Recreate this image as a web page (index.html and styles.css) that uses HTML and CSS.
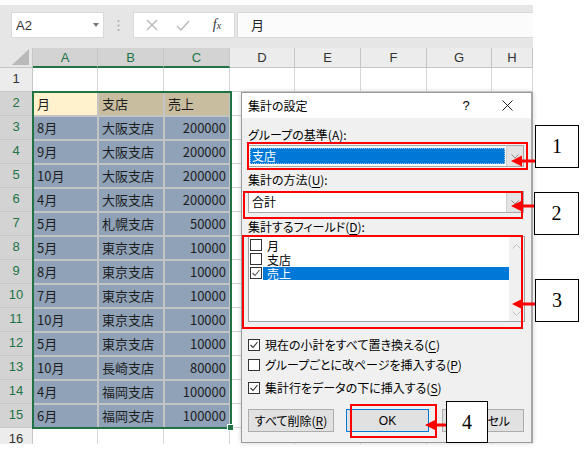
FILE: index.html
```html
<!DOCTYPE html>
<html lang="ja">
<head>
<meta charset="utf-8">
<title>集計の設定</title>
<link rel="stylesheet" href="styles.css">
</head>
<body>
<div class="sheet">
  <div class="fbar">
    <div class="namebox"><span>A2</span><svg width="6" height="4" viewBox="0 0 6 4"><path d="M0 0H6L3 4Z" fill="#777"/></svg></div>
    <div class="dots"><svg width="3" height="13" viewBox="0 0 3 13"><circle cx="1.5" cy="2" r="1" fill="#aaa"/><circle cx="1.5" cy="6.5" r="1" fill="#aaa"/><circle cx="1.5" cy="11" r="1" fill="#aaa"/></svg></div>
    <div class="fxbox">
      <span class="fx1"><svg width="12" height="12" viewBox="0 0 12 12"><path d="M1 1L11 11M11 1L1 11" stroke="#b5b5b5" stroke-width="1.3" fill="none"/></svg></span>
      <span class="fx2"><svg width="14" height="11" viewBox="0 0 14 11"><path d="M1 6L5 10L13 1" stroke="#b5b5b5" stroke-width="1.3" fill="none"/></svg></span>
      <span class="fx3"><i>f</i><i class="sx">x</i></span>
    </div>
    <div class="finput">月</div>
  </div>
  <div class="grid">
    <div class="row hdr"><div class="corner"><svg width="18" height="16" viewBox="0 0 18 16"><path d="M17 0V16H0Z" fill="#b9b9b9"/></svg></div><div class="ch s">A</div><div class="ch s">B</div><div class="ch s">C</div><div class="ch">D</div><div class="ch">E</div><div class="ch">F</div><div class="ch">G</div><div class="ch">H</div></div>
    <div class="row"><div class="rh">1</div><div class="c"></div><div class="c"></div><div class="c"></div><div class="c"></div><div class="c"></div><div class="c"></div><div class="c"></div><div class="c"></div></div>
    <div class="row"><div class="rh s">2</div><div class="a">月</div><div class="h">支店</div><div class="h">売上</div><div class="c"></div><div class="c"></div><div class="c"></div><div class="c"></div><div class="c"></div></div>
    <div class="row"><div class="rh s">3</div><div class="d">8月</div><div class="d">大阪支店</div><div class="d n">200000</div><div class="c"></div><div class="c"></div><div class="c"></div><div class="c"></div><div class="c"></div></div>
    <div class="row"><div class="rh s">4</div><div class="d">9月</div><div class="d">大阪支店</div><div class="d n">200000</div><div class="c"></div><div class="c"></div><div class="c"></div><div class="c"></div><div class="c"></div></div>
    <div class="row"><div class="rh s">5</div><div class="d">10月</div><div class="d">大阪支店</div><div class="d n">200000</div><div class="c"></div><div class="c"></div><div class="c"></div><div class="c"></div><div class="c"></div></div>
    <div class="row"><div class="rh s">6</div><div class="d">4月</div><div class="d">大阪支店</div><div class="d n">200000</div><div class="c"></div><div class="c"></div><div class="c"></div><div class="c"></div><div class="c"></div></div>
    <div class="row"><div class="rh s">7</div><div class="d">5月</div><div class="d">札幌支店</div><div class="d n">50000</div><div class="c"></div><div class="c"></div><div class="c"></div><div class="c"></div><div class="c"></div></div>
    <div class="row"><div class="rh s">8</div><div class="d">5月</div><div class="d">東京支店</div><div class="d n">10000</div><div class="c"></div><div class="c"></div><div class="c"></div><div class="c"></div><div class="c"></div></div>
    <div class="row"><div class="rh s">9</div><div class="d">8月</div><div class="d">東京支店</div><div class="d n">10000</div><div class="c"></div><div class="c"></div><div class="c"></div><div class="c"></div><div class="c"></div></div>
    <div class="row"><div class="rh s">10</div><div class="d">7月</div><div class="d">東京支店</div><div class="d n">10000</div><div class="c"></div><div class="c"></div><div class="c"></div><div class="c"></div><div class="c"></div></div>
    <div class="row"><div class="rh s">11</div><div class="d">10月</div><div class="d">東京支店</div><div class="d n">10000</div><div class="c"></div><div class="c"></div><div class="c"></div><div class="c"></div><div class="c"></div></div>
    <div class="row"><div class="rh s">12</div><div class="d">5月</div><div class="d">東京支店</div><div class="d n">10000</div><div class="c"></div><div class="c"></div><div class="c"></div><div class="c"></div><div class="c"></div></div>
    <div class="row"><div class="rh s">13</div><div class="d">10月</div><div class="d">長崎支店</div><div class="d n">80000</div><div class="c"></div><div class="c"></div><div class="c"></div><div class="c"></div><div class="c"></div></div>
    <div class="row"><div class="rh s">14</div><div class="d">4月</div><div class="d">福岡支店</div><div class="d n">100000</div><div class="c"></div><div class="c"></div><div class="c"></div><div class="c"></div><div class="c"></div></div>
    <div class="row"><div class="rh s">15</div><div class="d">6月</div><div class="d">福岡支店</div><div class="d n">100000</div><div class="c"></div><div class="c"></div><div class="c"></div><div class="c"></div><div class="c"></div></div>
    <div class="row"><div class="rh">16</div><div class="c"></div><div class="c"></div><div class="c"></div><div class="c"></div><div class="c"></div><div class="c"></div><div class="c"></div><div class="c"></div></div>
  </div>
</div>
<div class="selection"><span class="handle"></span></div>

<div class="dialog">
  <div class="titlebar">
    <span class="ttl">集計の設定</span>
    <span class="help">?</span>
    <span class="close"><svg width="11" height="11" viewBox="0 0 11 11"><path d="M0.5 0.5L10.5 10.5M10.5 0.5L0.5 10.5" stroke="#222" stroke-width="1" fill="none"/></svg></span>
  </div>
  <div class="dbody">
    <div class="lbl l1">グループの基準(<u>A</u>):</div>
    <div class="combo c1"><div class="cval sel"><span>支店</span></div><div class="cbtn"><svg width="8" height="5" viewBox="0 0 8 5"><path d="M0.5 0.5L4 4L7.5 0.5" stroke="#8a8a8a" fill="none"/></svg></div></div>
    <div class="lbl l2">集計の方法(<u>U</u>):</div>
    <div class="combo c2"><div class="cval"><span>合計</span></div><div class="cbtn"><svg width="8" height="5" viewBox="0 0 8 5"><path d="M0.5 0.5L4 4L7.5 0.5" stroke="#8a8a8a" fill="none"/></svg></div></div>
    <div class="lbl l3">集計するフィールド(<u>D</u>):</div>
    <div class="listbox">
      <div class="items">
        <div class="item"><span class="box"></span><span class="itxt">月</span></div>
        <div class="item"><span class="box"></span><span class="itxt">支店</span></div>
        <div class="item"><span class="box"><svg width="10" height="10" viewBox="0 0 10 10"><path d="M1.5 5L4 7.5L8.5 2" stroke="#555" stroke-width="1.1" fill="none"/></svg></span><span class="itxt hi">売上</span></div>
      </div>
      <div class="vscroll">
        <svg width="9" height="5" viewBox="0 0 9 5"><path d="M0.5 4.5L4.5 0.5L8.5 4.5" stroke="#c2c2c2" fill="none"/></svg>
        <svg width="9" height="5" viewBox="0 0 9 5"><path d="M0.5 0.5L4.5 4.5L8.5 0.5" stroke="#c2c2c2" fill="none"/></svg>
      </div>
    </div>
    <div class="chk k1"><span class="box"><svg width="10" height="10" viewBox="0 0 10 10"><path d="M1.5 5L4 7.5L8.5 2" stroke="#333" stroke-width="1.1" fill="none"/></svg></span><span>現在の小計をすべて置き換える(<u>C</u>)</span></div>
    <div class="chk k2"><span class="box"></span><span>グループごとに改ページを挿入する(<u>P</u>)</span></div>
    <div class="chk k3"><span class="box"><svg width="10" height="10" viewBox="0 0 10 10"><path d="M1.5 5L4 7.5L8.5 2" stroke="#333" stroke-width="1.1" fill="none"/></svg></span><span>集計行をデータの下に挿入する(<u>S</u>)</span></div>
    <div class="btns">
      <div class="btn b1">すべて削除(<u>R</u>)</div>
      <div class="btn ok">OK</div>
      <div class="btn b3">キャンセル</div>
    </div>
  </div>
</div>

<svg class="marks" width="585" height="461" viewBox="0 0 585 461">
  <g fill="none" stroke="#ff0000" stroke-width="2">
    <rect x="248" y="143" width="279" height="26"/>
    <rect x="244" y="192" width="278" height="26"/>
    <rect x="243" y="236" width="279" height="92"/>
    <rect x="351" y="405" width="85" height="32"/>
  </g>
  <g fill="#ff0000">
    <rect x="520" y="159.5" width="15" height="3"/><path d="M511 161L522 155.5V166.5Z"/>
    <rect x="520" y="204.5" width="15" height="3"/><path d="M511 206L522 200.5V211.5Z"/>
    <rect x="521" y="302.5" width="14" height="3"/><path d="M512 304L523 298.5V309.5Z"/>
    <rect x="434" y="423.5" width="12" height="3"/><path d="M425 425L436 419.5V430.5Z"/>
  </g>
</svg>

<div class="callout n1">1</div>
<div class="callout n2">2</div>
<div class="callout n3">3</div>
<div class="callout n4">4</div>
</body>
</html>
```

FILE: styles.css
```css
html, body {
  margin: 0;
  padding: 0;
}
body {
  position: relative;
  width: 585px;
  height: 461px;
  overflow: hidden;
  background: #ffffff;
  font-family: "Noto Sans CJK JP", "Noto Sans", sans-serif;
  color: #222;
}

/* ---------- sheet ---------- */
.sheet {
  margin-top: 5px;
  width: 533px;
  height: 439px;
  overflow: hidden;
  background: #e6e6e6;
}
.fbar {
  display: flex;
  height: 43px;
  padding-top: 7px;
  box-sizing: border-box;
}
.namebox {
  margin-left: 11px;
  width: 93px;
  height: 26px;
  box-sizing: border-box;
  background: #fff;
  border: 1px solid #d9d9d9;
  display: flex;
  align-items: center;
  justify-content: space-between;
  padding: 0 4px 0 4px;
  font-family: "Liberation Sans", sans-serif;
  font-size: 13px;
  color: #333;
}
.dots {
  width: 29px;
  display: flex;
  align-items: center;
  justify-content: center;
  height: 26px;
}
.fxbox {
  width: 102px;
  height: 26px;
  box-sizing: border-box;
  background: #fff;
  border: 1px solid #d9d9d9;
  display: flex;
  align-items: center;
  padding-left: 7px;
}
.fx1 { width: 21px; display: flex; justify-content: center; }
.fx2 { width: 41px; display: flex; justify-content: center; }
.fx3 {
  width: 28px;
  text-align: center;
  font-family: "Liberation Serif", serif;
  font-size: 14px;
  color: #333;
}
.fx3 .sx { font-size: 10px; }
.finput {
  margin-left: 2px;
  width: 296px;
  height: 26px;
  box-sizing: border-box;
  background: #fbfbfb;
  border: 1px solid #d9d9d9;
  border-right: none;
  padding-left: 13px;
  font-size: 13px;
  line-height: 24px;
  color: #222;
}

.grid { background: #fff; }
.row {
  display: grid;
  grid-template-columns: 33px 65px 66px 66px 65px 66px 66px 65px 41px;
  height: 24px;
}
.row.hdr { height: 20px; }
.row > div {
  box-sizing: border-box;
  border-right: 1px solid #d6d6d6;
  border-bottom: 1px solid #d6d6d6;
  font-size: 13px;
  line-height: 22px;
  white-space: nowrap;
  overflow: hidden;
}
.corner {
  background: #e6e6e6;
  display: flex;
  align-items: flex-end;
  justify-content: flex-end;
  padding: 0 2px 2px 0;
  border-color: #c6c6c6 !important;
}
.ch {
  background: #ececec;
  text-align: center;
  color: #333;
  line-height: 19px !important;
  font-family: "Liberation Sans", sans-serif;
  border-color: #c6c6c6 !important;
}
.ch.s {
  background: #d3d3d3;
  color: #217346;
  border-bottom: 2px solid #217346 !important;
}
.rh {
  background: #ececec;
  color: #333;
  text-align: center;
  font-family: "Liberation Sans", sans-serif;
  border-color: #c6c6c6 !important;
}
.rh.s {
  background: #d3d3d3;
  color: #217346;
}
.c { background: #fff; }
.d, .h, .a {
  padding: 0 3px;
  color: #1e1e1e;
  border: 1px solid #c4c4c4 !important;
}
.d { background: #8fa2b7; }
.h { background: #c9bd9f; }
.a { background: #fff2cc; }
.n { text-align: right; }

.selection {
  position: absolute;
  left: 32px;
  top: 91px;
  width: 200px;
  height: 338px;
  box-sizing: border-box;
  border: 2px solid #217346;
}
.handle {
  position: absolute;
  right: -4px;
  bottom: -4px;
  width: 5px;
  height: 5px;
  background: #217346;
  border: 1px solid #fff;
}

/* ---------- dialog ---------- */
.dialog {
  position: absolute;
  left: 241px;
  top: 92px;
  width: 292px;
  height: 351px;
  box-sizing: border-box;
  background: #f0f0f0;
  border: 1px solid #9a9a9a;
  border-right: 2px solid #a5a5a5;
  box-shadow: 0 0 5px rgba(0, 0, 0, 0.18);
  font-size: 12px;
  font-feature-settings: "palt";
  color: #000;
}
.titlebar {
  height: 25px;
  background: #fff;
  display: flex;
  align-items: center;
  padding: 0 4px 0 6px;
}
.ttl { flex: 1; }
.help {
  width: 20px;
  text-align: center;
  font-size: 13px;
  margin-right: 11px;
  font-family: "Liberation Sans", sans-serif;
}
.close {
  width: 40px;
  display: flex;
  justify-content: center;
}
.dbody {
  padding: 0 7px 0 6px;
}
.lbl { line-height: 16px; height: 16px; }
.l1 { margin-top: 9px; }
.l2 { margin-top: 5px; }
.l3 { margin-top: 6px; }
u { text-decoration-thickness: 1px; text-underline-offset: 2px; }

.combo {
  height: 22px;
  box-sizing: border-box;
  border: 1px solid #a8a8a8;
  background: #fff;
  display: flex;
}
.c1 { margin-top: 2px; }
.c2 { margin-top: 3px; }
.cval {
  flex: 1;
  padding: 2px 1px 2px 1px;
  display: flex;
}
.cval span {
  flex: 1;
  padding-left: 2px;
  line-height: 16px;
}
.cval.sel span {
  background: #0078d7;
  color: #fff;
  outline: 1px dotted #9ec4e8;
  outline-offset: -1px;
}
.cbtn {
  width: 16px;
  background: #e3e3e3;
  border-left: 1px solid #d0d0d0;
  display: flex;
  align-items: center;
  justify-content: center;
}

.listbox {
  margin-top: 1px;
  height: 86px;
  width: 277px;
  box-sizing: border-box;
  background: #fff;
  border: 1px solid #a0a0a0;
  display: flex;
}
.items {
  flex: 1;
  padding-top: 1px;
}
.item {
  height: 14px;
  display: flex;
  align-items: center;
}
.item .box { margin-left: 1px; margin-right: 1px; }
.box {
  width: 12px;
  height: 12px;
  box-sizing: border-box;
  border: 1px solid #333;
  background: #fff;
  display: inline-flex;
  align-items: center;
  justify-content: center;
  flex: none;
}
.itxt {
  flex: 1;
  padding-left: 4px;
  line-height: 13px;
}
.itxt.hi {
  background: #0078d7;
  color: #fff;
}
.vscroll {
  width: 15px;
  background: #f0f0f0;
  display: flex;
  flex-direction: column;
  justify-content: space-between;
  align-items: center;
  padding: 7px 0 5px;
  box-sizing: border-box;
}

.chk {
  height: 16px;
  display: flex;
  align-items: center;
  gap: 5px;
  line-height: 16px;
}
.k1 { margin-top: 15px; }
.k2 { margin-top: 4px; }
.k3 { margin-top: 7px; }

.btns {
  margin-top: 13px;
  display: flex;
}
.btn {
  height: 23px;
  box-sizing: border-box;
  background: #e1e1e1;
  border: 1px solid #adadad;
  display: flex;
  align-items: center;
  justify-content: center;
}
.b1 { width: 86px; }
.ok {
  width: 83px;
  margin-left: 12px;
  border: 1px solid #0078d7;
  font-family: "Liberation Sans", sans-serif;
  font-size: 12px;
}
.b3 { width: 82px; margin-left: 13px; }

/* ---------- annotations ---------- */
.marks {
  position: absolute;
  left: 0;
  top: 0;
}
.callout {
  position: absolute;
  box-sizing: border-box;
  background: #fff;
  border: 1px solid #000;
  display: flex;
  align-items: center;
  justify-content: center;
  font-family: "Liberation Serif", serif;
  font-size: 20px;
  color: #000;
}
.n1 { left: 535px; top: 125px; width: 44px; height: 43px; }
.n2 { left: 534px; top: 192px; width: 45px; height: 43px; }
.n3 { left: 535px; top: 279px; width: 44px; height: 43px; }
.n4 { left: 446px; top: 401px; width: 42px; height: 42px; }
```
